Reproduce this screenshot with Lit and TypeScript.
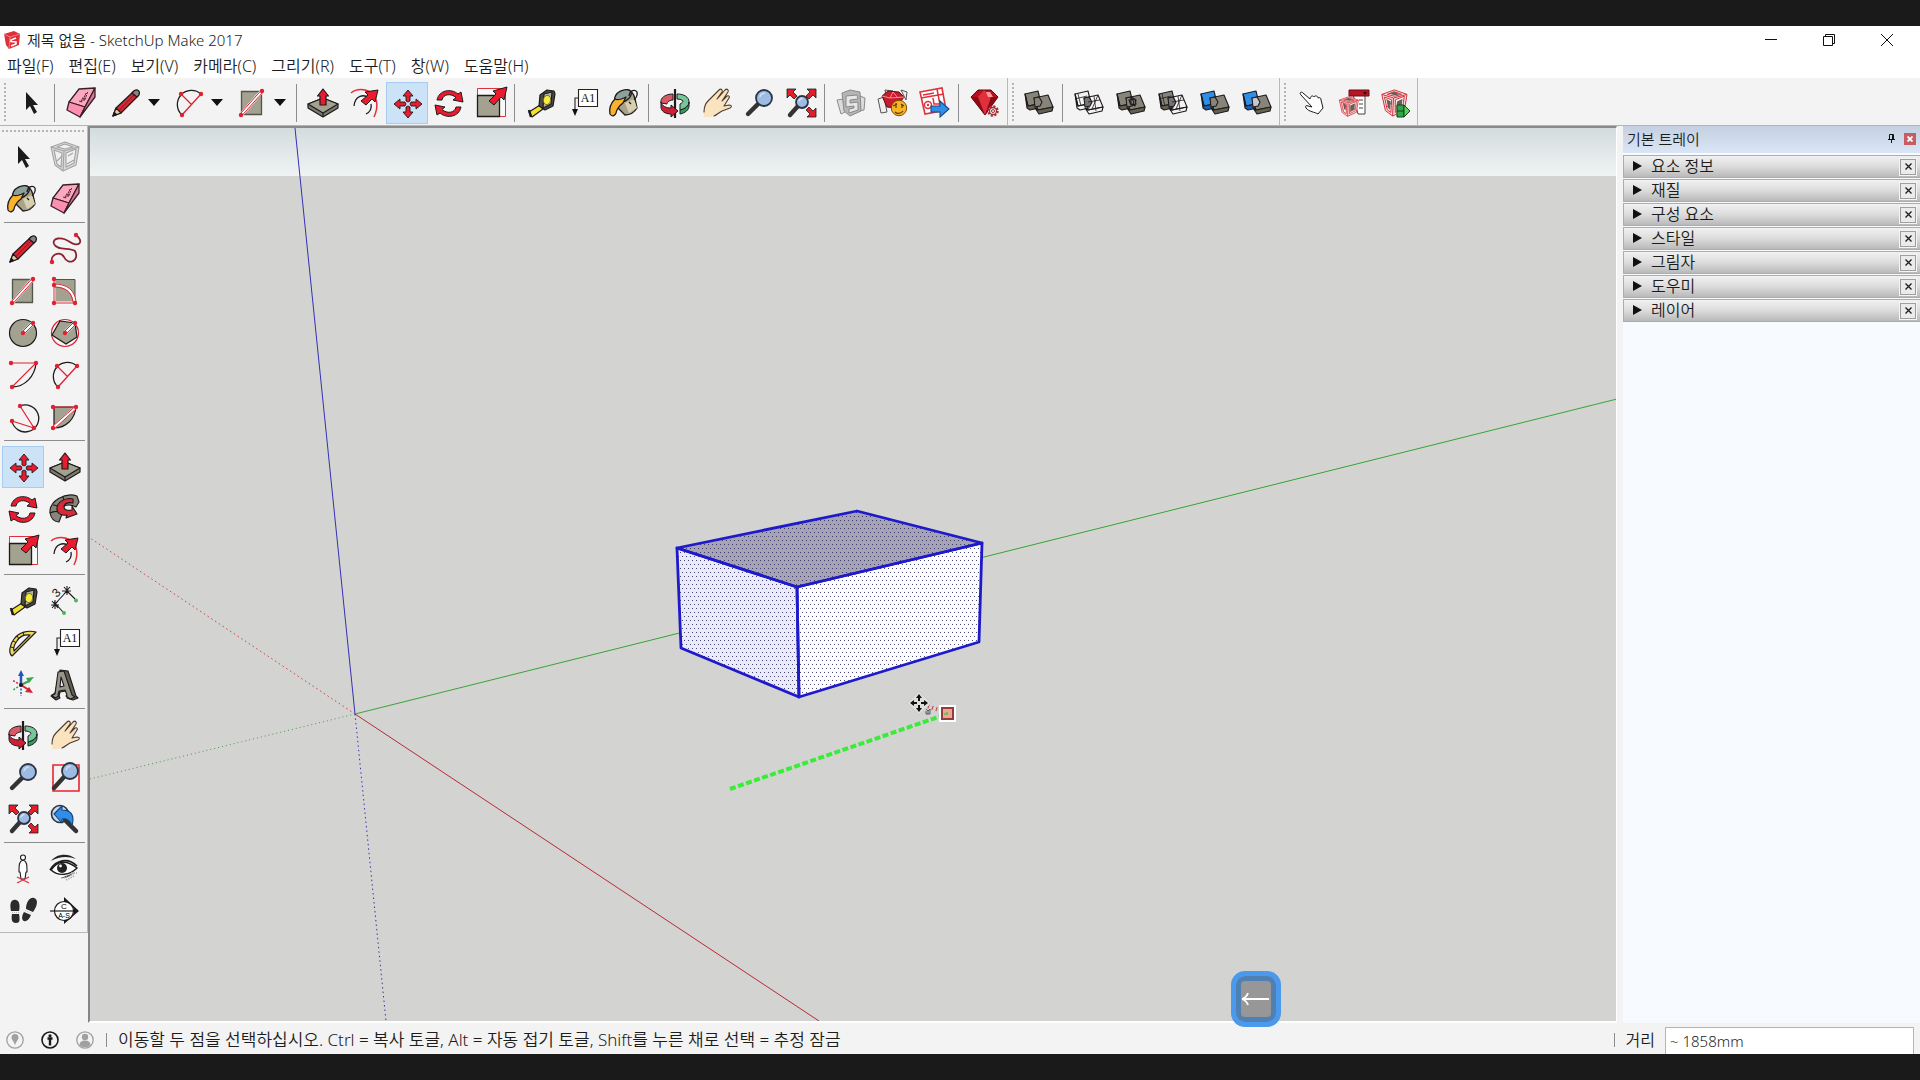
import { LitElement, html, css, svg } from "lit";
import type { SVGTemplateResult, TemplateResult } from "lit";
import { customElement, state } from "lit/decorators.js";
import { classMap } from "lit/directives/class-map.js";

const K = "#1d1a1c";
const RED = "#e81c2e";
const STONE = "#a3a18f";

const dots = (...pts: [number, number][]) =>
  pts.map(([x, y]) => svg`<circle cx=${x} cy=${y} r="2.2" fill="#dd2233"/>`);

const magnifier = (cx: number, cy: number, r: number, hx: number, hy: number) => svg`
  <path d="M${cx - r * 0.7} ${cy + r * 0.7}L${hx} ${hy}" stroke="#333" stroke-width="4.4" stroke-linecap="round"/>
  <circle cx=${cx} cy=${cy} r=${r} fill="#9dbbe3" stroke="#2c3444" stroke-width="1.8"/>
  <path d="M${cx - r * 0.5} ${cy - r * 0.1}a${r * 0.6} ${r * 0.6} 0 0 1 ${r * 0.6} ${-r * 0.5}" fill="none" stroke="#cfe0f5" stroke-width="1.6"/>`;

/* Two overlapping slabs shared by the solid tools. */
const solids = (back: string, front: string, mid: string, ghost = "") => svg`
  <g stroke=${K} stroke-width="1.1" stroke-linejoin="round">
    <path d="M2 7L15 4l3 12-13 3z" fill=${back}/>
    <path d="M2 7l3 12 11-2v4l-9 2-3-2z" fill=${back === "none" ? "none" : back === "#2f8fe8" ? "#1c5fae" : "#64624f"}/>
    <path d="M11 11l14-3 5 12-15 3z" fill=${front}/>
    <path d="M15 23l15-3-1 4-13 3-4-6z" fill=${front === "none" ? "none" : "#64624f"}/>
    <path d="M11 11l5-1 3 5-2 4-5 1z" fill=${mid}/>
    ${ghost === "wire" ? svg`<path d="M5 7l3 12M2 12l12-3M15 15l12-2M21 9l2 15M25 8l-6 14" fill="none" stroke-width=".8"/>` : null}
    ${ghost === "inner" ? svg`<path d="M14 13l6-1 1 5-5 1zM16 10l5 3-1 6-4-2z" fill="none"/>` : null}
  </g>`;

const cubeFrame = (c: string, fill: string) => svg`
  <g fill=${fill} stroke=${c} stroke-width="1.1" stroke-linejoin="round">
    <path d="M2 6L16 1l14 5-3 18-13 6L6 24z"/>
    <path d="M2 6l13 4 15-4M15 10l-1 20" fill="none"/>
    <path d="M5 9l8 3-1 14-4-3zM17 12l10-4-2 14-8 4zM8 6l8-3 8 3-8 2z" fill="#fff" fill-opacity=".6"/>
    <path d="M8 20l5-5M18 23l7-4M19 15l5-3" fill="none"/>
  </g>`;

const icons: Record<string, SVGTemplateResult> = {
  select: svg`<path d="M11 5v18l4-4 4 8 3-2-4-7h5z" fill=${K}/>`,
  component: cubeFrame("#a2a2a2", "#d9d9d9"),
  bucket: svg`<g stroke=${K} stroke-width="1.3" stroke-linejoin="round">
    <path d="M8 10L17 3c4-2 8 4 9 9l2 9c-3 5-8 7-12 7L8 20z" fill="#aaa38c"/>
    <path d="M16 16l9-4 3 9-8 5z" fill="#d8cfae" stroke="none"/>
    <ellipse cx="14" cy="9" rx="9" ry="5.5" transform="rotate(-28 14 9)" fill="#8ea09c"/>
    <path d="M6 12C1 17 0 22 1 27c2 3 5 2 6-1 1-5 3-7 7-10l3-6c-4 2-8 4-11 2z" fill="#fbb32c"/>
    <path d="M20 9c1-6 6-7 8-4 1 4-1 6-3 8M20 15l2 2" fill="none"/></g>`,
  eraser: svg`<g stroke="#3a1f27" stroke-width="1.3" stroke-linejoin="round">
    <path d="M14 2L30 1 20 20 4 15z" fill="#fba9c0"/>
    <path d="M4 15l16 5-5 10L2 23z" fill="#fd8fb0"/>
    <path d="M30 1v9L15 30l5-10z" fill="#d97898"/>
    <path d="M14 14l3 1-1-2 4 0-3-2 4 1-2-3 3 0-2-2 3-1-1-1" fill="none" stroke="#6b3043" stroke-width="1"/></g>`,
  pencil: svg`<g stroke=${K} stroke-width="1.2" stroke-linejoin="round">
    <path d="M3 29l3-8L24 4l5 4L11 26z" fill="#d8252f"/>
    <path d="M3 29l3-8 5 5z" fill="#e7cfa0"/><path d="M3 29l1.300-3.500 2.200 2z" fill=${K}/>
    <path d="M9 23.500L26 6" fill="none" stroke="#8d1820" stroke-width="1"/>
    <path d="M22 6l2.500-2.500c3-2 6 1 4.500 4L27 10z" fill="#8a8580"/></g>`,
  freehand: svg`<path d="M27 2C36 9 29 15 21 9 12 3 3 5 5 11 8 18 21 14 26 18 31 28 19 33 15 24 11 17 1 22 3 29" fill="none" stroke="#8c2230" stroke-width="1.8"/>${dots([27, 2], [3, 29])}`,
  rectangle: svg`<path d="M5.500 4.500h20v23h-20z" fill=${STONE} stroke="#55534a" stroke-width="1.3"/>
    <path d="M5 28L26 4" stroke="#fff" stroke-width="4"/><path d="M4.500 26.500L25 3.500M6.500 28L27 5" stroke="#dd2233"/>${dots([26, 4], [5, 28])}`,
  rotrect: svg`<path d="M6 4.500h20v23H6z" fill=${STONE} stroke="#55534a"/>
    <path d="M5 4v24h21M5 10c12 0 20 6 21 18" fill="none" stroke="#fff" stroke-width="3"/>
    <path d="M5 4v24h21M5 9c13 0 21 6 22 18M5 12c11 0 18 5 19 15" fill="none" stroke="#dd2233"/>${dots([5, 4], [5, 10], [5, 28], [26, 28])}`,
  circle: svg`<circle cx="16" cy="16" r="13.5" fill=${STONE} stroke=${K} stroke-width="1.2"/>
    <path d="M16 16L26 6" stroke="#fff" stroke-width="4"/><path d="M15 15L25 5M17 17L27 7" stroke="#dd2233"/>${dots([16, 16], [26, 6])}`,
  polygon: svg`<circle cx="16" cy="16" r="13.5" fill="none" stroke="#dd2233" stroke-width="1.2"/>
    <path d="M11 4l15 2 2 14-11 7L3 18z" fill=${STONE} stroke=${K} stroke-width="1.2"/>
    <path d="M16 16L26 6" stroke="#fff" stroke-width="4"/><path d="M15 15L25 5M17 17L27 7" stroke="#dd2233"/>${dots([16, 16], [26, 6])}`,
  arc: svg`<path d="M29 4C28 17 18 28 5 28" fill="none" stroke=${K} stroke-width="1.3"/>
    <path d="M4 4h25L5 28" fill="none" stroke="#dd2233" stroke-width="1.1"/>${dots([4, 4], [29, 4], [5, 28])}`,
  arc2: svg`<path d="M28 7A14 14 0 1 0 9 28" fill="none" stroke=${K} stroke-width="1.3"/>
    <path d="M28 7L9 28M8 7l10.500 10.500" stroke="#dd2233" stroke-width="1.3"/>${dots([8, 7], [28, 7], [9, 28])}`,
  arc3: svg`<path d="M13 5A13.500 13.500 0 1 1 5 20" fill="none" stroke=${K} stroke-width="1.3"/>
    <path d="M13 5l14 22L5 20" fill="none" stroke="#dd2233" stroke-width="1.2"/>${dots([13, 5], [5, 20], [27, 27])}`,
  pie: svg`<path d="M5 6h22C26 18 17 27 5 27z" fill=${STONE} stroke=${K} stroke-width="1.2"/>
    <path d="M4 27L27 6" stroke="#fff" stroke-width="3.5"/><path d="M4 6h23M3.500 25.500L26 5.500M5 28L28 7" stroke="#dd2233"/>${dots([4, 6], [27, 6], [4, 27])}`,
  move: svg`<g fill=${RED} stroke=${K} stroke-width=".9" stroke-linejoin="round">
    ${[0, 90, 180, 270].map((a) => svg`<path transform="rotate(${a} 17 17)" d="M17 3l5 6h-3v5l-2 1-2-1V9h-3z"/>`)}</g>`,
  pushpull: svg`<g stroke=${K} stroke-width="1.2" stroke-linejoin="round">
    <path d="M1 17l15-6 15 6v4l-15 9L1 21z" fill="#7d7b6d"/><path d="M1 17l15-6 15 6-15 9z" fill=${STONE}/>
    <path d="M16 26v4" /><path d="M16 2l5.500 7H19v9h-6V9h-2.500z" fill=${RED}/></g>`,
  rotate: svg`<g fill=${RED} stroke=${K} stroke-width="1" stroke-linejoin="round">
    ${[0, 180].map((a) => svg`<path transform="rotate(${a} 16 16.500)" d="M4 13C6 3 18 1 25 7l3-2 2 10-10-2 3-2.500C18 6 10 7 9 13z"/>`)}</g>`,
  followme: svg`<g stroke=${K} stroke-width="1.1" stroke-linejoin="round">
    <path d="M28 3C16-1 0 8 1 20c1 5 4 9 9 9l3-8C8 15 18 9 27 14l3-5z" fill="#88867a"/>
    <path d="M1 20c4-2 9-2 12 1M4 12c3 0 5 1 6 3M14 4c0 2 1 4 3 6" fill="none"/>
    <path d="M24 6C15 4 7 10 8 17c1 4 5 6 10 5l-1 3 11-4-5-8v4c-4 1-8 0-8-3 0-4 5-5 9-4z" fill="#d82a38"/></g>`,
  scale: svg`<path d="M2.500 1.500h28v28h-28z" fill="#fff" fill-opacity=".5" stroke="#e0303c"/>
    <path d="M2.500 8.500h22v21h-22z" fill=${STONE} stroke=${K} stroke-width="1.3"/>
    <path d="M32 0l-3 13-3-3-7 8-5-4 7-7-3-3z" fill=${RED} stroke=${K} stroke-width="1" stroke-linejoin="round"/>`,
  offset: svg`<path d="M2 6C13-3 36 6 25 30" fill="none" stroke="#e0303c" stroke-width="1.5"/>
    <path d="M5 19c1-11 10-12 15-8M22 17c1 5-1 8-5 10" fill="none" stroke=${K} stroke-width="1.3"/>
    <path d="M29 3l-3 12-3-3-6 6-5-4 7-6-3-3z" fill=${RED} stroke=${K} stroke-width="1" stroke-linejoin="round"/>`,
  tape: svg`<g stroke=${K} stroke-width="1.2" stroke-linejoin="round">
    <path d="M4 25l11-7 3 4L7 30z" fill="#f3df2e"/><path d="M4 23l2 7" stroke-width="2.5"/>
    <path d="M15 8l7-5 7 1 1 3-2 12-8 4-6-4z" fill="#4a4a46"/><path d="M19 7l8-2-1 12-8 4z" fill="#b3b3a4"/>
    <ellipse cx="22" cy="13" rx="3.600" ry="4.600" transform="rotate(12 22 13)" fill="#f8ec3c" stroke="#6b6420" stroke-width=".8"/></g>`,
  text: svg`<path d="M11.500 2.500h19v17h-19z" fill="#fff" stroke="#222" stroke-width="1.1"/>
    <text x="21" y="15" font-size="12" text-anchor="middle" font-family="Liberation Serif, serif" fill="#111">A1</text>
    <path d="M11 11H8v12" fill="none" stroke="#222" stroke-width="1.1"/><path d="M5 22h6l-3 7z" fill="#111"/>`,
  dimension: svg`<path d="M6 19L18 6M5 17l9 10M17 5l9 9M2 20h8M6 15v9M13 6h9M18 1v9M3 16l6 7M15 2l6 7M3 23l6-7M15 9l6-7" fill="none" stroke=${K} stroke-width="1.1"/>
    <circle cx="15" cy="28" r="2" fill="#4db84f"/><circle cx="27" cy="15.500" r="2" fill="#4db84f"/>
    <text x="4" y="12" font-size="12" transform="rotate(-45 7 8)" font-family="Liberation Sans, sans-serif" fill=${K}>3</text>`,
  protractor: svg`<path fill-rule="evenodd" d="M29 5L5 29C1 26 3 17 7 12 12 5 21 3 29 5zM23 8C17 7 12 10 10 14c-3 4-4 7-3 10z" fill="#eed95a" stroke=${K} stroke-width="1.2" stroke-linejoin="round"/>
    <path d="M4 20l3 1M6 14l3 1.500M10 9l2 3M16 5.500l1 3" stroke=${K}/>`,
  axes: svg`<path d="M14 16V6" stroke="#2456b8" stroke-width="2.5"/><path d="M11 7h6l-3-6z" fill="#2456b8"/>
    <path d="M14 16l8-4" stroke="#3aa64a" stroke-width="2"/><path d="M19 9l8-1-5 6z" fill="#3aa64a"/>
    <path d="M14 16l8 5" stroke="#d42430" stroke-width="2"/><path d="M22 18l4 6-8-1z" fill="#d42430"/>
    <path d="M14 16v11" stroke="#2456b8" stroke-width="1.5" stroke-dasharray="2 1.500"/><path d="M14 16l-8 5" stroke="#3aa64a" stroke-width="1.5" stroke-dasharray="2 1.500"/>
    <path d="M14 16l-9-5" stroke="#d42430" stroke-width="1.5" stroke-dasharray="2 1.500"/><circle cx="14" cy="16" r="2" fill=${K}/>`,
  text3d: svg`<g stroke=${K} stroke-width="1.1" stroke-linejoin="round"><path d="M11 1l8 1 8 25 2 2-5 2-6-2 1-2-2-5-6 1-1 4 1 2-4 2-5-4 4-3z" fill="#5e5d56"/>
    <path d="M9 3l6-1 8 24 3 2-5 2-4-3 1-1-2-5-6 1-1 4 1 1-4 2-3-3 3-1z" fill="#98968a"/><path d="M12 8l3 9-4 1z" fill="#ececec"/></g>`,
  orbit: svg`<g stroke=${K} stroke-width="1" stroke-linejoin="round">
    <path d="M14 7C6 7 1 11 2 16l6 1c0-2 3-4 6-4z" fill="#d95a64"/>
    <path d="M18 7c7 0 12 3 12 8 0 4-4 7-9 8v-6c2-1 3-2 3-3-1-1-3-2-6-2z" fill="#77c69a"/>
    <path d="M30 15v4c0 4-4 7-9 8v-4c5-1 9-4 9-8z" fill="#2f9e5f"/>
    <path d="M16 2v29" stroke-width="2.2"/>
    <path d="M2 15c1 4 5 6 10 6v-3l7 6-7 6v-3C6 27 2 24 2 20z" fill="#cf1f35"/></g>`,
  hand: svg`<path d="M3 30c0-8 0-12 4-16L18 3c2-2 4 0 3 2l-4 6 7-8c2-2 4 0 3 2l-5 8 4-4c2-1 3 1 2 2l-5 8 6-1c2 0 2 2 0 3l-8 3c-5 4-9 6-14 6z" fill="#fae3bf"/>
    <path d="M3 25c0-5 1-8 4-11L18 3c2-2 4 0 3 2l-5 7m1-1l7-8c2-2 4 0 3 2l-6 9m1-1l4-4c2-1 3 1 2 2l-5 8 5-1c3 0 3 2 1 3l-8 3c-4 2-5 4-8 5" fill="none" stroke="#4b3b30" stroke-width="1.1" stroke-linecap="round" stroke-linejoin="round"/>`,
  zoom: magnifier(21, 11, 8, 5, 27),
  zoomwindow: svg`<path d="M4 4h26v26H4z" fill="none" stroke="#e8252f" stroke-width="1.6"/>${magnifier(21, 10, 8, 5, 27)}`,
  extents: svg`${magnifier(17, 15, 6, 5, 28)}
    <g fill="#e01f2d" stroke=${K} stroke-width=".8" stroke-linejoin="round"><path d="M2 2h9l-3 3 4 4-3 3-4-4-3 3z"/><path d="M31 2v9l-3-3-4 4-3-3 4-4-3-3z"/><path d="M31 30h-9l3-3-4-4 3-3 4 4 3-3z"/></g>`,
  previous: svg`<circle cx="11" cy="11" r="8.5" fill="#c5d9ee" stroke="#2c3444" stroke-width="1.6"/>
    <path d="M16 17l11 11" stroke="#333" stroke-width="4.5" stroke-linecap="round"/>
    <path d="M5 11L13 3v4c9 0 13 5 10 16-2-6-5-8-10-7v4z" fill="#2f8fe8" stroke="#173f75" stroke-width="1.1" stroke-linejoin="round"/>`,
  person: svg`<g fill="#fff" stroke=${K} stroke-width="1.1" stroke-linejoin="round"><path d="M16 7c-4 1-4 5-4 12h1l1 7h4l1-7h1c0-7 0-11-4-12z"/><circle cx="16" cy="4.500" r="2.500"/></g>
    <path d="M10 30l12-6M10 24l12 6" stroke="#e0303c" stroke-width="1.3"/>`,
  eye: svg`<path d="M2 8C8 0 20 0 27 6 20 3 10 3 2 8z" fill="#222"/><path d="M2 17C9 7 18 7 28 15c-7 7-18 9-26 2z" fill="#fff" stroke=${K} stroke-width="1.4"/>
    <path d="M1 17C7 7 19 4 28 13" fill="none" stroke=${K} stroke-width="1.6"/><circle cx="13" cy="15" r="5" fill="#222"/><circle cx="11.500" cy="13" r="1.400" fill="#fff"/>
    <path d="M12 25c5 0 9-2 13-5M17 27l8-4M22 20l6 0" stroke="#aaa" stroke-width="1.5" stroke-dasharray="1.500 1"/>`,
  feet: svg`<g fill="#2b2b2b"><path d="M4 16C2 7 5 4 9 5c4 1 4 7 3 11z"/><path d="M5 19h7c1 6 1 9-3 9-4 0-5-3-4-9z"/><path d="M19 14c0-7 4-12 8-11 5 1 3 9-1 14z"/><path d="M17 17l7 3c-2 5-5 7-7 6-3-1-2-6 0-9z"/></g>
    <path d="M5 17.500h7M18 15.500l7 3" stroke="#bbb" stroke-dasharray="1 1"/>`,
  section: svg`<circle cx="15" cy="16" r="9.500" fill="#fff" stroke=${K} stroke-width="1.2"/><path d="M15 2l15 14-15 13v-4c5 0 10-4 10-9S20 7 15 7z" fill=${K}/><path d="M1 16h28" stroke=${K} stroke-width="1.2"/>
    <text x="15" y="14" text-anchor="middle" font-size="8" font-family="Liberation Sans, sans-serif">C</text><text x="15" y="23" text-anchor="middle" font-size="7" font-family="Liberation Sans, sans-serif">A-S</text>`,
  warehouse: svg`<g fill="#b5b5b5" stroke="#8a8a8a" stroke-width="1" stroke-linejoin="round"><path d="M2 13l6-1 2 13-4 2zM25 9l5 2-1 12-5 1z" fill="#dcdcdc"/>
    <path d="M7 6l8-3 10 2 1 19-11 5-6-5z"/><path d="M11 9l11-1 1 4-8 1v3l8-1v8l-9 3v-4l5-1v-2l-8 1z" fill="#e6e6e6"/></g>`,
  extension: svg`<path d="M1 12l6-2 3 15-6 1zM24 3l6 2-1 8zM8 3l8 1-7 4z" fill="#eee" stroke="#555"/>
    <path d="M5 9l6-5 11 1 5 5-8 11-9-1z" fill="#c81b2b" stroke="#5b0d15"/><path d="M5 9l8 2 14-1M13 11l3-6 5 6" fill="none" stroke="#ff8d92"/>
    <circle cx="22" cy="21" r="7.700" fill="#fab428" stroke="#7a4f06"/><path d="M19 16v5M25 17v4M18 25c2 2 6 2 8-1M16 19l4-2M24 17l3 2" stroke="#5c3b05" stroke-width="1.2" fill="none"/>`,
  layout: svg`<path d="M1 5l22-4 4 22-21 4z" fill="#fff" stroke="#e0303c" stroke-width="1.6"/><path d="M2 11l23-4M18 2l4 21M4 8l11-2M14 11l1 6h5" fill="none" stroke="#e0303c" stroke-width="1.5"/>
    <circle cx="9" cy="18" r="3.500" fill="none" stroke="#e0303c" stroke-width="1.4"/><circle cx="9" cy="18" r="1.200" fill="#e0303c"/>
    <path d="M12 19h9v-5l9 8-9 8v-5h-9z" fill="#2f8fe8" stroke="#164b86" stroke-width="1.1"/>`,
  ruby: svg`<path d="M2 10l7-7h13l7 7-13 18z" fill="#b8101e" stroke="#5b0d15"/><path d="M2 10h27L16 28z" fill="#8c0a16"/><path d="M9 10l6-7 7 7-6 18z" fill="#e0303c"/><path d="M17 5l4 0 3 5h-5z" fill="#ff9a9e"/>
    <circle cx="24" cy="24" r="4.500" fill="#f3f3f3" stroke="#a32c36" stroke-width="2.500" stroke-dasharray="2 1.500"/><circle cx="24" cy="24" r="3.500" fill="#f3f3f3" stroke="#a32c36" stroke-width="1.3"/><circle cx="24" cy="24" r="1.500" fill="none" stroke="#a32c36" stroke-width="1"/>`,
  outer: solids("#87857a", "#87857a", "#87857a"),
  intersect: solids("none", "none", "#77757a", "wire"),
  union: solids("#87857a", "#87857a", "#87857a", "inner"),
  subtract: solids("#87857a", "none", "#77757a", "wire"),
  trim: solids("#2f8fe8", "#87857a", "#87857a"),
  split: solids("#2f8fe8", "#87857a", "#c9c7d0"),
  pointer: svg`<path d="M6 8c-2-2 0-4 2-2l7 6c0-3 3-4 4-2 1-2 4-1 4 1 2-1 3 0 3 2l2 8-5 6c-3-2-9-2-12-6-1-2 0-3 2-2l4 1z" fill="#fff" stroke=${K} stroke-width="1" stroke-linejoin="round"/>`,
  compopts: svg`<path d="M16 7h12v20h-7z" fill="#fff" stroke="#444"/><path d="M22 13h4M22 17h4M22 21h4" stroke="#444"/><path d="M12 3h20v6H12z" fill="#b51626" stroke="#6d0c17"/><path d="M26 5h4l-2 3z" fill="#400"/>
    <g transform="translate(1 9) scale(.68)">${cubeFrame("#d5303c", "#f3cfcb")}<path d="M7 10l5 3-1 8-2-2zM18 14l7-3-1 9-6 3zM10 5l6-2 6 3-6 1z" fill="#6a5f58"/></g>`,
  compattrs: svg`<g transform="translate(1 2) scale(.9)">${cubeFrame("#d5303c", "#f6dcd8")}<path d="M7 11l5 3-1 9-2-2zM19 14l6-3-1 8-6 3zM10 5l6-2 6 3-6 1z" fill="#6a5f58"/></g>
    <path d="M18 18h7v12h-7z" fill="#2fa843" stroke="#17401e"/><path d="M18 24h7" stroke="#17401e"/><path d="M25 18l6 6-6 6z" fill="#53d258" stroke="#17401e"/>`,
};

type Tool = { id: string; label: string; drop?: boolean };
const t = (id: string, label: string, drop = false): Tool => ({ id, label, drop });

const topGroups: Tool[][][] = [
  [
    [t("select", "선택")],
    [t("eraser", "지우개"), t("pencil", "선", true), t("arc2", "호", true), t("rectangle", "직사각형", true)],
    [t("pushpull", "밀기/끌기"), t("offset", "오프셋"), t("move", "이동"), t("rotate", "회전"), t("scale", "배율")],
    [t("tape", "줄자"), t("text", "텍스트"), t("bucket", "페인트통")],
    [t("orbit", "궤도"), t("hand", "화면 이동"), t("zoom", "확대/축소"), t("extents", "범위 확대")],
    [t("warehouse", "3D Warehouse"), t("extension", "Extension Warehouse"), t("layout", "LayOut")],
    [t("ruby", "확장 관리자")],
  ],
  [
    [t("outer", "외부 셸")],
    [t("intersect", "교차"), t("union", "결합"), t("subtract", "빼기"), t("trim", "트림"), t("split", "분할")],
  ],
  [[t("pointer", "상호 작용"), t("compopts", "구성 요소 옵션"), t("compattrs", "구성 요소 속성")]],
];

const sideGroups: Tool[][] = [
  [t("select", "선택"), t("component", "구성 요소 만들기"), t("bucket", "페인트통"), t("eraser", "지우개")],
  [
    t("pencil", "선"), t("freehand", "자유형"), t("rectangle", "직사각형"), t("rotrect", "회전된 직사각형"), t("circle", "원"),
    t("polygon", "다각형"), t("arc", "호"), t("arc2", "2점 호"), t("arc3", "3점 호"), t("pie", "파이"),
  ],
  [t("move", "이동"), t("pushpull", "밀기/끌기"), t("rotate", "회전"), t("followme", "따라가기"), t("scale", "배율"), t("offset", "오프셋")],
  [t("tape", "줄자"), t("dimension", "치수"), t("protractor", "각도기"), t("text", "텍스트"), t("axes", "축"), t("text3d", "3D 텍스트")],
  [t("orbit", "궤도"), t("hand", "화면 이동"), t("zoom", "확대/축소"), t("zoomwindow", "창 확대"), t("extents", "범위 확대"), t("previous", "이전")],
  [t("person", "카메라 배치"), t("eye", "둘러보기"), t("feet", "이동 시점"), t("section", "단면")],
];

const menus = ["파일(F)", "편집(E)", "보기(V)", "카메라(C)", "그리기(R)", "도구(T)", "창(W)", "도움말(H)"];
const panels = ["요소 정보", "재질", "구성 요소", "스타일", "그림자", "도우미", "레이어"];

@customElement("app-root")
export class AppRoot extends LitElement {
  @state() private active = "move";

  static styles = css`
    :host {
      display: flex;
      flex-direction: column;
      min-height: 100vh;
      box-sizing: border-box;
      padding: 26px 0;
      background: #1a1a1a;
      color: #1c1c1c;
      font: 350 15px/20px "Noto Sans", "Noto Sans CJK KR", sans-serif;
    }
    * { box-sizing: border-box; }
    button {
      margin: 0;
      padding: 0;
      border: 0;
      background: none;
      color: inherit;
      font: inherit;
    }
    svg { display: block; }
    .titlebar {
      display: flex;
      align-items: center;
      height: 28px;
      padding: 0 4px;
      background: #fff;
    }
    .logo { width: 16px; height: 18px; margin-right: 7px; }
    .title { flex: 1; margin: 0; font: inherit; }
    .window-btn {
      display: grid;
      place-items: center;
      width: 58px;
      height: 28px;
    }
    .menubar {
      display: flex;
      align-items: center;
      gap: 15px;
      height: 24px;
      padding: 0 7px;
      background: #fff;
      font-size: 16px;
    }
    .toolbars {
      display: flex;
      height: 48px;
      background: #f3f3f3;
      border-bottom: 1px solid #b4b4b4;
    }
    .toolbar {
      display: flex;
      align-items: center;
      padding: 2px 1px 0 0;
      border-right: 1px solid #b9b9b9;
    }
    .grip {
      width: 2px;
      height: 40px;
      margin: 0 4px;
      background: repeating-linear-gradient(#b5b5b5 0 2px, transparent 2px 4px);
    }
    .sep {
      width: 1px;
      height: 38px;
      margin: 0 5px 0 2px;
      background: #8c8c8c;
    }
    .tool {
      display: grid;
      place-items: center;
      width: 42px;
      height: 42px;
      border: 1px solid transparent;
    }
    .tool.on { background: #cbe2f7; border-color: #a5cdf2; }
    .splitbtn { display: flex; padding-left: 3px; }
    .splitbtn + .sep { margin-left: 5px; }
    .drop { display: grid; place-items: center; width: 18px; padding-right: 4px; }
    .main { display: flex; flex: 1; background: #f3f3f3; min-height: 0; }
    .side {
      align-self: flex-start;
      width: 88px;
      padding: 3px 1px 0 2px;
      border-right: 1px solid #b9b9b9;
      border-bottom: 1px solid #b9b9b9;
    }
    .side-grip {
      height: 2px;
      margin: 1px 0 4px;
      background: repeating-linear-gradient(90deg, #b5b5b5 0 2px, transparent 2px 4px);
    }
    .side-group { display: grid; grid-template-columns: 42px 42px; }
    .side-sep { height: 1px; margin: 2px 1px 5px 2px; background: #8c8c8c; }
    .view {
      position: relative;
      display: flex;
      flex: 1;
      min-width: 0;
      border: solid #fff;
      border-width: 2px 1px 2px 2px;
      border-top-color: #8a8a8a;
      border-left-color: #858585;
    }
    .scene { flex: 1; width: 100%; height: 100%; min-height: 0; }
    .key {
      position: absolute;
      right: 335px;
      bottom: -6px;
      display: grid;
      place-items: center;
      width: 50px;
      height: 56px;
      border: 5px solid #4a99ec;
      border-radius: 14px;
      background: #979797;
      box-shadow: inset 0 0 0 5px #4f80b4;
      z-index: 1;
    }
    .tray { width: 303px; padding-left: 6px; display: flex; flex-direction: column; }
    .tray-head {
      display: flex;
      align-items: center;
      gap: 8px;
      height: 27px;
      padding: 0 4px 2px;
      background: linear-gradient(#c4d0e1, #dae5f5);
    }
    .tray-title { flex: 1; margin: 0; font: inherit; }
    .tray-close {
      display: grid;
      place-items: center;
      width: 12px;
      height: 12px;
      background: #c65d62;
    }
    .tray-body { flex: 1; padding-top: 2px; background: #f7faff; }
    .panel {
      display: flex;
      align-items: center;
      height: 23px;
      margin-bottom: 1px;
      padding-right: 4px;
      border: 1px solid #adadad;
      border-right: 0;
      background: linear-gradient(#f1f1f1, #dcdcdc 50%, #b9b9b9);
    }
    .expand {
      display: flex;
      flex: 1;
      align-items: center;
      gap: 9px;
      padding: 0 0 2px 9px;
      font-size: 16px;
    }
    .panel-close {
      display: grid;
      place-items: center;
      width: 16px;
      height: 16px;
      border: 1px solid #9f9f9f;
      outline: 1px solid #f4f4f4;
      background: #ebebeb;
    }
    .status {
      display: flex;
      align-items: center;
      height: 31px;
      padding: 2px 6px 0;
      background: #f3f3f3;
      overflow: hidden;
    }
    .status-icons { display: flex; gap: 17px; }
    .bar { width: 1px; height: 14px; margin: 0 11px 0 12px; background: #8c8c8c; }
    .hint { flex: 1; font-size: 17px; }
    .measure { display: flex; align-items: center; gap: 10px; align-self: stretch; }
    .measure label { font-size: 16px; }
    .value {
      align-self: flex-end;
      width: 249px;
      height: 27px;
      padding: 0 4px;
      border: 1px solid #aab8c4;
      border-bottom: 0;
      background: #fff;
      color: inherit;
      font: inherit;
    }
  `;

  private pick(id: string) {
    this.active = id;
  }

  private icon(id: string): TemplateResult {
    return html`<svg width="32" height="32" viewBox="0 0 32 32" overflow="visible" aria-hidden="true">${icons[id]}</svg>`;
  }

  private tool(tool: Tool): TemplateResult {
    const button = html`<button
      class=${classMap({ tool: true, on: tool.id === this.active })}
      aria-label=${tool.label}
      @click=${() => this.pick(tool.id)}
    >${this.icon(tool.id)}</button>`;
    return tool.drop
      ? html`<div class="splitbtn">${button}<button class="drop" aria-label="${tool.label} 목록">
          <svg width="12" height="7" viewBox="0 0 12 7"><path d="M0 0h12L6 7z" fill="#111" /></svg></button></div>`
      : button;
  }

  private scene() {
    const top = "857,511 982,543 797,587 677,548";
    const left = "677,548 797,587 799,697 681,648";
    const right = "797,587 982,543 979,642 799,697";
    return html`<svg class="scene" viewBox="90 128 1526 893" preserveAspectRatio="xMidYMid slice" role="img" aria-label="모델 보기">
      <defs>
        <linearGradient id="sky" x1="0" y1="0" x2="0" y2="1"><stop offset="0" stop-color="#d3dcdd" /><stop offset="1" stop-color="#f0f3f4" /></linearGradient>
        <pattern id="dots" width="4" height="8" patternUnits="userSpaceOnUse">
          <path d="M0 0h1v1H0zM2 4h1v1H2z" fill="#2c2c60" fill-opacity=".85" />
        </pattern>
      </defs>
      <rect x="90" y="128" width="1526" height="893" fill="#d3d3d1" />
      <rect x="90" y="128" width="1526" height="48" fill="url(#sky)" />
      <g fill="none">
        <path d="M355 714L295 128" stroke="#3530b4" />
        <path d="M355 714L1617 399" stroke="#35a535" />
        <path d="M355 714L819 1021" stroke="#b82a35" />
        <path d="M355 714L90 538" stroke="#d0404a" stroke-dasharray="1.500 3" />
        <path d="M355 714L90 779" stroke="#459a45" stroke-dasharray="1 3" />
        <path d="M355 714l31 307" stroke="#3a38a8" stroke-dasharray="1.500 3" />
      </g>
      <polygon points=${top} fill="#a6a4b4" /><polygon points=${left} fill="#eaeafa" /><polygon points=${right} fill="#fdfdff" />
      <g fill="url(#dots)"><polygon points=${top} /><polygon points=${left} /><polygon points=${right} /></g>
      <g fill="none" stroke="#1f19cc" stroke-width="2.800" stroke-linejoin="round">
        <polygon points=${top} /><polygon points=${left} /><polygon points=${right} />
      </g>
      <path d="M730 789L947 714" stroke="#38ec38" stroke-width="4" stroke-dasharray="6 2.500" />
      <path d="M924 705l15 5" stroke="#c0505a" stroke-width="4" stroke-dasharray="1.200 3" />
      <path d="M907 703l12-12 12 12-12 12z" fill="#dededc" stroke="#c6c6c4" stroke-width=".8" />
      <g fill="#111">
        ${[0, 90, 180, 270].map((a) => svg`<path transform="rotate(${a} 919 703)" d="M919 694l3 4h-2v3h-2v-3h-2z"/>`)}
      </g>
      <path d="M926 709l2 2 2-2M926 711v3h2v-3M930 709v5h-2" fill="none" stroke="#555" />
      <rect x="939" y="705" width="17" height="17" fill="#fff" />
      <rect x="942" y="708" width="11" height="11" fill="#f0a592" stroke="#923c40" stroke-width="2" />
      <path d="M945 715v-2M947 715v-3" stroke="#48c848" stroke-width="1.500" />
    </svg>`;
  }

  render() {
    return html`
      <header class="titlebar">
        <svg class="logo" viewBox="0 0 16 18"><path d="M0 3l10-3 6 3-1 11-10 4-3-4z" fill="#de3038" /><path d="M0 3l6 3 10-3M5 18l1-12" stroke="#f27e80" fill="none" />
          <path d="M12 7l-5 2v1.500l5 .5v2l-5 2" fill="none" stroke="#fff" stroke-width="1.5" /></svg>
        <h1 class="title">제목 없음 - SketchUp Make 2017</h1>
        <button class="window-btn" aria-label="최소화"><svg width="12" height="12"><path d="M0 5.500h12" stroke="#111" /></svg></button>
        <button class="window-btn" aria-label="이전 크기로"><svg width="12" height="12" fill="none" stroke="#111"><path d="M.5 2.500h9v9h-9zM2.500 2.500v-2h9v9h-2" /></svg></button>
        <button class="window-btn" aria-label="닫기"><svg width="12" height="12" stroke="#111"><path d="M0 0l12 12M12 0L0 12" /></svg></button>
      </header>
      <nav class="menubar">${menus.map((m) => html`<button>${m}</button>`)}</nav>
      <div class="toolbars">
        ${topGroups.map((bar) => html`<div class="toolbar" role="toolbar"><span class="grip"></span>
          ${bar.map((g, i) => html`${i ? html`<span class="sep"></span>` : null}${g.map((x) => this.tool(x))}`)}</div>`)}
      </div>
      <main class="main">
        <div class="side" role="toolbar">
          <div class="side-grip"></div>
          ${sideGroups.map((g, i) => html`${i ? html`<div class="side-sep"></div>` : null}<div class="side-group">${g.map((x) => this.tool(x))}</div>`)}
        </div>
        <section class="view">
          ${this.scene()}
          <div class="key"><svg width="28" height="14" viewBox="0 0 28 14" fill="none" stroke="#fff" stroke-width="1.8"><path d="M0 7h27M6 1C5 4 3 6 0 7c3 1 5 3 6 6" /></svg></div>
        </section>
        <aside class="tray">
          <div class="tray-head">
            <h2 class="tray-title">기본 트레이</h2>
            <button aria-label="자동 숨기기"><svg width="9" height="9" fill="none" stroke="#111"><path d="M2.500 6V.5h4V6M1 5.500h7M4.500 6v3M5.500 1v5" /></svg></button>
            <button class="tray-close" aria-label="트레이 닫기"><svg width="6" height="6" stroke="#fff" stroke-width="1.8"><path d="M.5.5l5 5M5.500.5l-5 5" /></svg></button>
          </div>
          <div class="tray-body">
            ${panels.map((p) => html`<div class="panel">
              <button class="expand" aria-expanded="false"><svg width="9" height="10"><path d="M0 0v10l9-5z" fill="#111" /></svg>${p}</button>
              <button class="panel-close" aria-label="${p} 닫기"><svg width="7" height="7" stroke="#222" stroke-width="1.4"><path d="M.5.5l6 6M6.500.5l-6 6" /></svg></button>
            </div>`)}
          </div>
        </aside>
      </main>
      <footer class="status">
        <div class="status-icons">
          <svg width="18" height="18" fill="none" stroke="#a0a0a0" stroke-width="1.3"><circle cx="9" cy="9" r="8.200" /><path d="M9 14.500C8 10 5.500 9 5.500 6.500a3.500 3.500 0 0 1 7 0C12.500 9 10 10 9 14.500z" fill="#a0a0a0" stroke="none" /></svg>
          <svg width="18" height="18" fill="none" stroke="#1a1a1a" stroke-width="1.6"><circle cx="9" cy="9" r="8" /><circle cx="9" cy="4.800" r="1.600" fill="#1a1a1a" stroke="none" /><path d="M6.500 7.500h5M9 7v7.500" stroke-width="2.400" /></svg>
          <svg width="18" height="18"><circle cx="9" cy="9" r="8.200" fill="none" stroke="#a0a0a0" stroke-width="1.3" /><circle cx="9" cy="6" r="3.200" fill="#a0a0a0" /><path d="M3.500 14c0-3 2-4.500 5.500-4.500s5.500 1.500 5.500 4.500c-3 3-8 3-11 0z" fill="#a0a0a0" /></svg>
        </div>
        <span class="bar"></span>
        <span class="hint">이동할 두 점을 선택하십시오. Ctrl = 복사 토글, Alt = 자동 접기 토글, Shift를 누른 채로 선택 = 추정 잠금</span>
        <span class="bar"></span>
        <div class="measure"><label for="distance">거리</label><input id="distance" class="value" type="text" value="~ 1858mm" /></div>
      </footer>
    `;
  }
}
